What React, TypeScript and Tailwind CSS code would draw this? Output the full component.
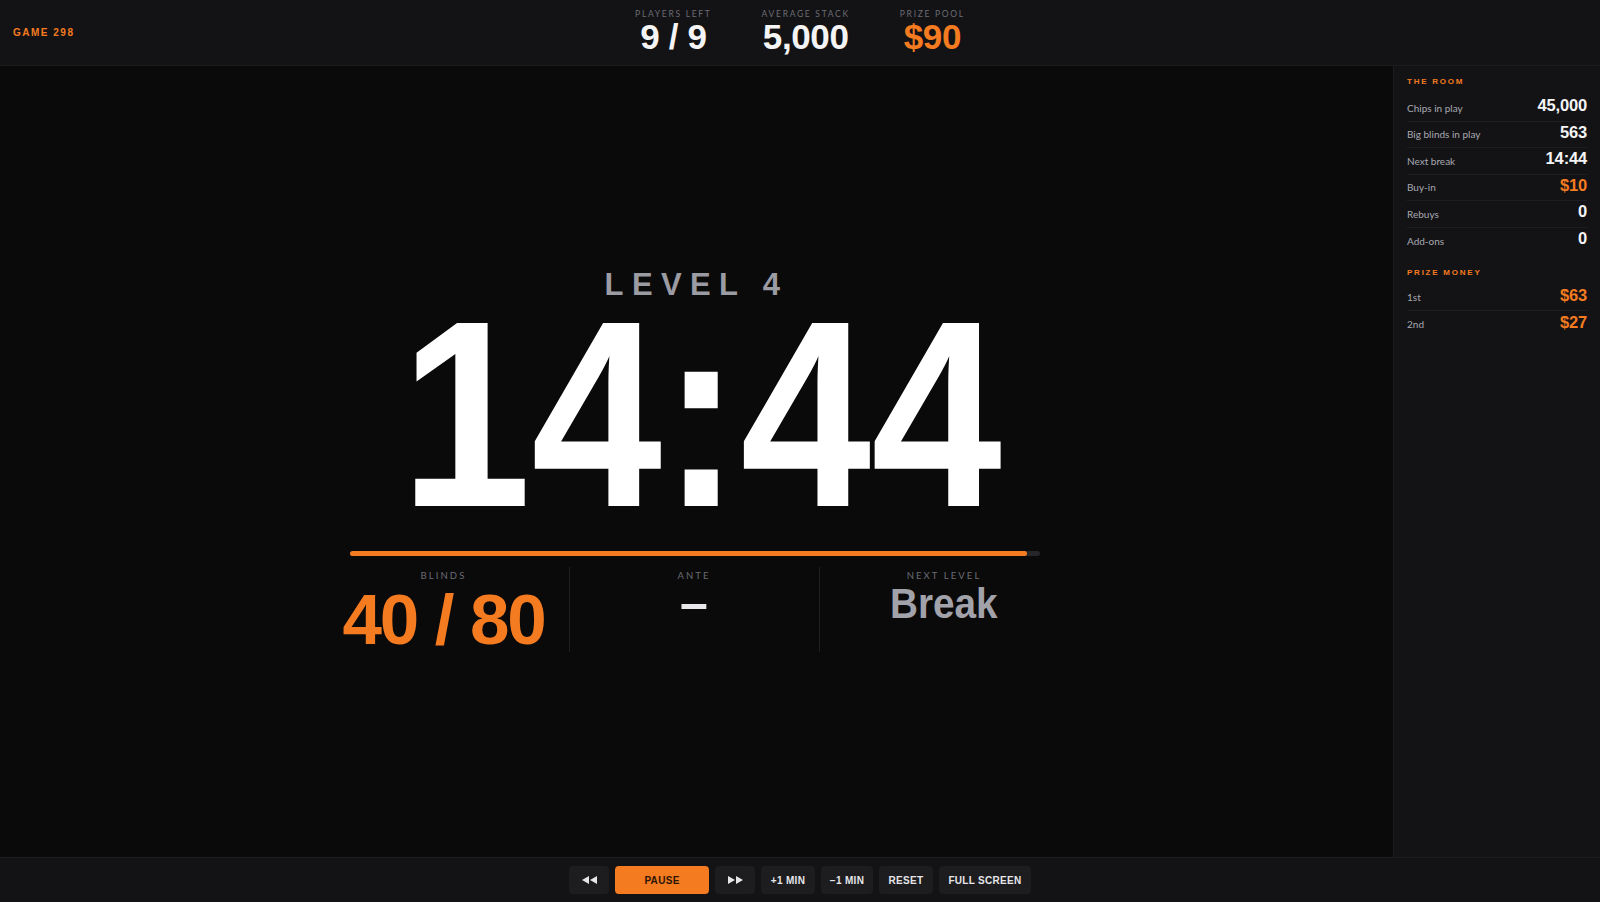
import React from "react";

const DIN = "font-['Liberation_Sans','Arial',sans-serif]";

function Rewind() {
  return (
    <svg width="15" height="8" viewBox="0 0 15 8" fill="currentColor">
      <polygon points="7,0 7,8 0,4" />
      <polygon points="15,0 15,8 8,4" />
    </svg>
  );
}

function Forward() {
  return (
    <svg width="15" height="8" viewBox="0 0 15 8" fill="currentColor">
      <polygon points="0,0 0,8 7,4" />
      <polygon points="8,0 8,8 15,4" />
    </svg>
  );
}

function HeaderStat({ label, value, orange }: { label: string; value: string; orange?: boolean }) {
  return (
    <div className="flex flex-col items-center">
      <div className="font-['Lato',sans-serif] text-[8.5px] leading-none tracking-[0.2em] text-[#6c6c74] uppercase">
        {label}
      </div>
      <div
        className={`${DIN} mt-[5px] text-[35px] font-bold leading-[0.72] tracking-[-0.01em] ${
          orange ? "text-[#f57b20]" : "text-[#f4f4f5]"
        }`}
      >
        {value}
      </div>
    </div>
  );
}

function Row({ label, value, orange, last }: { label: string; value: string; orange?: boolean; last?: boolean }) {
  return (
    <div
      className={`flex h-[26.5px] items-center justify-between ${last ? "" : "border-b border-[#1e1e22]"}`}
    >
      <span className="font-['Lato',sans-serif] text-[10px] leading-none text-[#a9a9b1]">{label}</span>
      <span
        className={`${DIN} mb-[3px] text-[16.5px] font-bold leading-[0.72] tracking-[-0.01em] ${
          orange ? "text-[#f57b20]" : "text-[#f4f4f5]"
        }`}
      >
        {value}
      </span>
    </div>
  );
}

function Btn({ children, w, primary }: { children: React.ReactNode; w: string; primary?: boolean }) {
  return (
    <button
      className={`${w} flex h-[28px] items-center justify-center rounded-[4px] font-['Liberation_Sans',sans-serif] text-[10px] font-bold tracking-[0.03em] ${
        primary ? "bg-[#f57b20] text-[#2b1606]" : "bg-[#1d1d20] text-[#e6e6e8]"
      }`}
    >
      {children}
    </button>
  );
}

export default function App() {
  const progress = 98.2;
  return (
    <div className="flex h-[902px] w-full flex-col overflow-hidden bg-[#0a0a0a]">
      {/* Header */}
      <header className="grid h-[66px] shrink-0 grid-cols-[1fr_auto_1fr] border-b border-[#1c1c1f] bg-[#131316]">
        <div className="flex items-center pl-[13px]">
          <span className="font-['Liberation_Sans',sans-serif] text-[10px] font-bold leading-none tracking-[0.15em] text-[#f57b20]">
            GAME 298
          </span>
        </div>
        <div className="flex items-start gap-[50px] pt-[10px]">
          <HeaderStat label="Players left" value="9 / 9" />
          <HeaderStat label="Average stack" value="5,000" />
          <HeaderStat label="Prize pool" value="$90" orange />
        </div>
        <div />
      </header>

      {/* Middle */}
      <div className="flex min-h-0 flex-1">
        <main className="flex flex-1 flex-col items-center bg-[#0a0a0a] pt-[208px]">
          <div className={`${DIN} text-[31px] font-bold leading-[0.72] tracking-[0.27em] text-[#9b9ba3]`}>
            LEVEL 4
          </div>
          <div
            className={`${DIN} ml-[10px] mt-[22px] scale-x-[0.884] text-[266px] font-bold leading-[0.72] tracking-[0em] text-white`}
          >
            14:44
          </div>
          <div className="mr-[4px] mt-[41px] h-[5px] w-[690px] rounded-full bg-[#262628]">
            <div className="h-full rounded-full bg-[#f57b20]" style={{ width: `${progress}%` }} />
          </div>
          <div className="mr-[6px] mt-[11px] grid w-[750px] grid-cols-3">
            <div className="flex h-[85px] flex-col items-center pt-[4px]">
              <div className="font-['Lato',sans-serif] text-[9.5px] leading-none tracking-[0.22em] text-[#6c6c74]">
                BLINDS
              </div>
              <div
                className={`${DIN} mt-[14px] whitespace-nowrap text-[71px] font-bold leading-[0.72] tracking-[-0.03em] text-[#f57b20]`}
              >
                40 / 80
              </div>
            </div>
            <div className="flex h-[85px] flex-col items-center border-l border-[#1f1f22] pt-[4px]">
              <div className="font-['Lato',sans-serif] text-[9.5px] leading-none tracking-[0.22em] text-[#6c6c74]">
                ANTE
              </div>
              <div className={`${DIN} mt-[5px] text-[50px] font-bold leading-[0.72] text-[#e8e8ea]`}>–</div>
            </div>
            <div className="flex h-[85px] flex-col items-center border-l border-[#1f1f22] pt-[4px]">
              <div className="font-['Lato',sans-serif] text-[9.5px] leading-none tracking-[0.22em] text-[#6c6c74]">
                NEXT LEVEL
              </div>
              <div
                className={`${DIN} mt-[8px] scale-x-[0.9] text-[43px] font-bold leading-[0.72] tracking-[0em] text-[#a2a2aa]`}
              >
                Break
              </div>
            </div>
          </div>
        </main>

        <aside className="w-[207px] shrink-0 border-l border-[#1c1c1f] bg-[#131316] px-[13px] pt-[12px]">
          <div className="font-['Liberation_Sans',sans-serif] text-[8px] font-bold leading-none tracking-[0.22em] text-[#f57b20]">
            THE ROOM
          </div>
          <div className="mt-[9px]">
            <Row label="Chips in play" value="45,000" />
            <Row label="Big blinds in play" value="563" />
            <Row label="Next break" value="14:44" />
            <Row label="Buy-in" value="$10" orange />
            <Row label="Rebuys" value="0" />
            <Row label="Add-ons" value="0" last />
          </div>
          <div className="mt-[14.5px] font-['Liberation_Sans',sans-serif] text-[8px] font-bold leading-none tracking-[0.22em] text-[#f57b20]">
            PRIZE MONEY
          </div>
          <div className="mt-[8px]">
            <Row label="1st" value="$63" orange />
            <Row label="2nd" value="$27" orange last />
          </div>
        </aside>
      </div>

      {/* Footer */}
      <footer className="flex h-[45px] shrink-0 items-center justify-center gap-[6px] border-t border-[#1c1c1f] bg-[#131316]">
        <Btn w="w-[40px]">
          <Rewind />
        </Btn>
        <Btn w="w-[94px]" primary>
          PAUSE
        </Btn>
        <Btn w="w-[40px]">
          <Forward />
        </Btn>
        <Btn w="w-[54px]">+1 MIN</Btn>
        <Btn w="w-[52px]">−1 MIN</Btn>
        <Btn w="w-[54px]">RESET</Btn>
        <Btn w="w-[92px]">FULL SCREEN</Btn>
      </footer>
    </div>
  );
}
